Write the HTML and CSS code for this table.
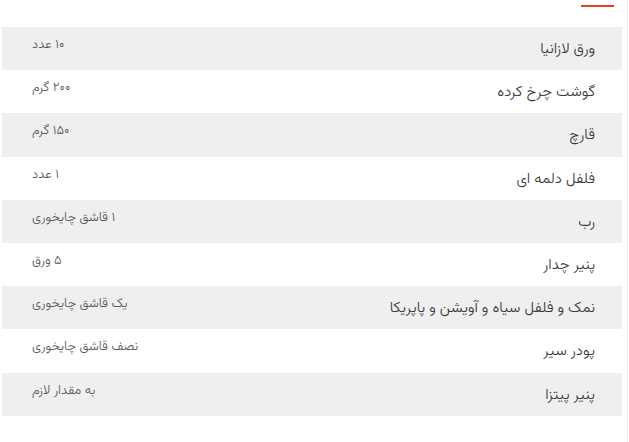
FILE: index.html
```html
<!DOCTYPE html>
<html lang="fa" dir="rtl">
<head>
<meta charset="utf-8">
<link rel="stylesheet" href="styles.css">
</head>
<body>
<div class="page">
  <div class="tab-bar"><span class="tab-underline"></span></div>
  <ul class="ingredients">
    <li class="row"><span class="name">ورق لازانیا</span><span class="qty">۱۰ عدد</span></li>
    <li class="row"><span class="name">گوشت چرخ کرده</span><span class="qty">۲۰۰ گرم</span></li>
    <li class="row"><span class="name">قارچ</span><span class="qty">۱۵۰ گرم</span></li>
    <li class="row"><span class="name">فلفل دلمه ای</span><span class="qty">۱ عدد</span></li>
    <li class="row"><span class="name">رب</span><span class="qty">۱ قاشق چایخوری</span></li>
    <li class="row"><span class="name">پنیر چدار</span><span class="qty">۵ ورق</span></li>
    <li class="row"><span class="name">نمک و فلفل سیاه و آویشن و پاپریکا</span><span class="qty">یک قاشق چایخوری</span></li>
    <li class="row"><span class="name">پودر سیر</span><span class="qty">نصف قاشق چایخوری</span></li>
    <li class="row"><span class="name">پنیر پیتزا</span><span class="qty">به مقدار لازم</span></li>
  </ul>
</div>
</body>
</html>
```
FILE: styles.css
```css
html, body {
  margin: 0;
  padding: 0;
  background: #ffffff;
}
body {
  font-family: "Vazirmatn", "Noto Sans Arabic", "DejaVu Sans", sans-serif;
  color: #333333;
}
.page {
  width: 628px;
  height: 442px;
  margin-left: 0;
  margin-right: auto;
  border-right: 1px solid #ececec;
  box-sizing: border-box;
  padding: 0 5px 0 2px;
}
.tab-bar {
  height: 27px;
  display: flex;
  padding-right: 8px;
}
.tab-underline {
  display: block;
  width: 33px;
  height: 2px;
  margin-top: 5px;
  background: #e3401f;
}
.ingredients {
  list-style: none;
  margin: 0;
  padding: 0;
  width: 620px;
}
.row {
  display: flex;
  justify-content: space-between;
  align-items: flex-start;
  height: 43.2px;
  box-sizing: border-box;
  padding: 0 27px 0 30px;
}
.row:nth-child(odd) {
  background: #efefef;
}
.name {
  font-size: 15px;
  font-weight: 300;
  line-height: 20px;
  margin-top: 13px;
  color: #3a3a3a;
}
.qty {
  font-size: 13px;
  font-weight: 300;
  line-height: 16px;
  margin-top: 10px;
  color: #5a5a5a;
}
```
